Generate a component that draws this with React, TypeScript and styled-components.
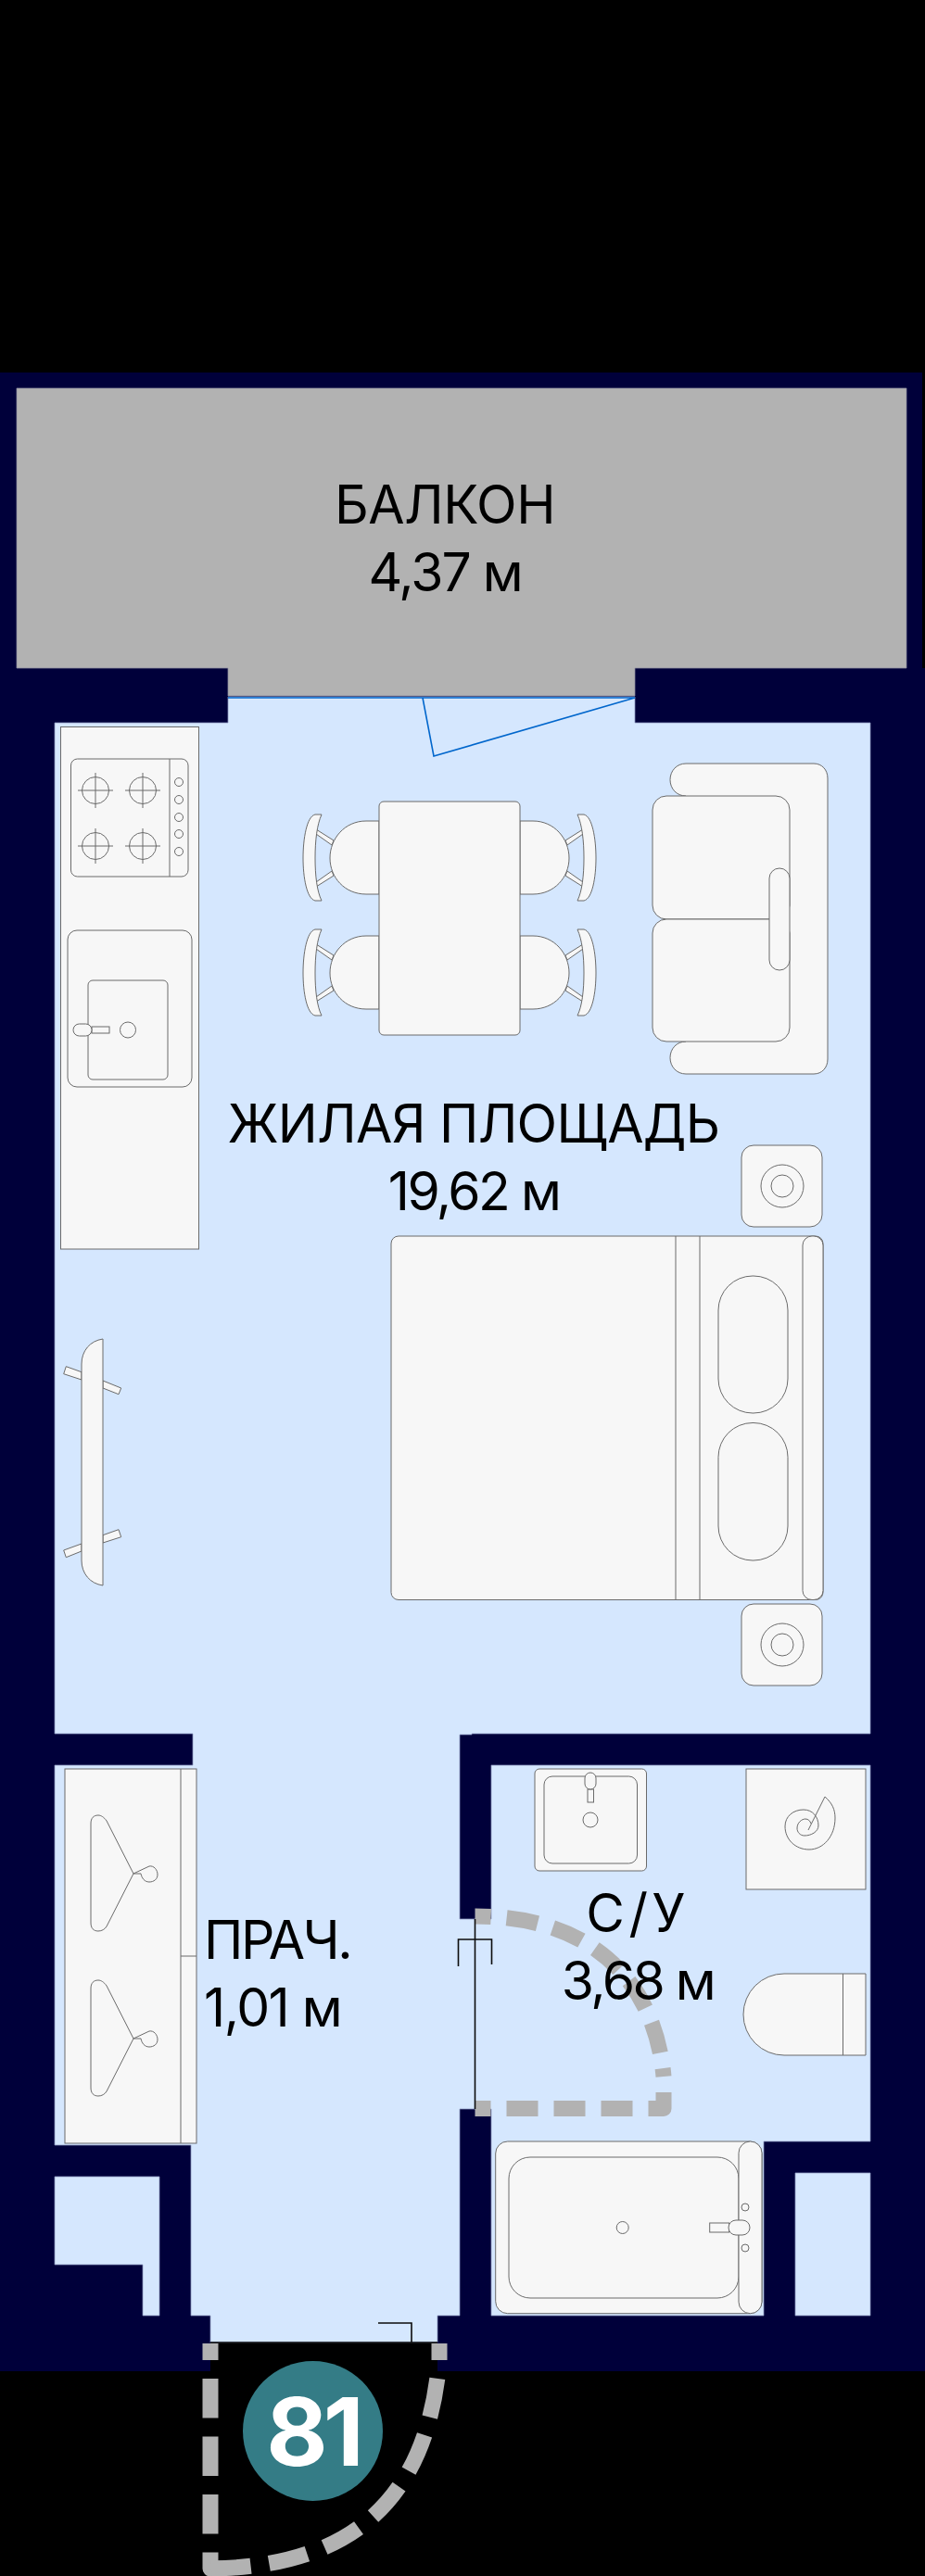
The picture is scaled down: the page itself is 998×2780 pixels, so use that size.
import styled, { createGlobalStyle } from "styled-components";

const GlobalStyle = createGlobalStyle`
  html, body {
    margin: 0;
    background: #000;
  }
`;

const Page = styled.div`
  position: relative;
  width: 998px;
  height: 2780px;
  overflow: hidden;
  background: #000;
  font-family: Inter, "Liberation Sans", sans-serif;
`;

const Drawing = styled.svg`
  display: block;
`;

const Wall = styled.polygon`
  fill: #00003a;
`;

const Room = styled.polygon`
  fill: #d5e7fe;
  stroke: #8b97bd;
  stroke-width: 0.75;
`;

const BalconyFloor = styled.polygon`
  fill: #b2b2b2;
  stroke: #8e8ea2;
  stroke-width: 0.75;
`;

const Furniture = styled.g`
  fill: #f7f7f7;
  stroke: #6b6b6b;
  stroke-width: 1;
`;

const WindowLine = styled.path`
  fill: none;
  stroke: #0066cc;
  stroke-width: 1.6;
`;

const DoorLine = styled.path`
  fill: none;
  stroke: #0c0c0c;
  stroke-width: 1.6;
`;

const Swing = styled.path<{ $dash: string }>`
  fill: none;
  stroke: #b2b2b2;
  stroke-width: 17;
  stroke-linejoin: round;
  stroke-dasharray: ${(p) => p.$dash};
`;

const RoomLabel = styled.div<{ $left: number; $top: number; $width: number; $align?: string }>`
  position: absolute;
  left: ${(p) => p.$left}px;
  top: ${(p) => p.$top}px;
  width: ${(p) => p.$width}px;
  color: #000;
  font-size: 57px;
  font-weight: 400;
  line-height: 73px;
  text-align: ${(p) => p.$align ?? "center"};
  white-space: nowrap;
`;

const RoomName = styled.div<{ $spacing: number }>`
  letter-spacing: ${(p) => p.$spacing}px;
`;

const RoomArea = styled.div<{ $spacing: number }>`
  letter-spacing: ${(p) => p.$spacing}px;
`;

const Badge = styled.div`
  position: absolute;
  left: 262px;
  top: 2548px;
  display: flex;
  align-items: center;
  justify-content: center;
  width: 151px;
  height: 151px;
  border-radius: 50%;
  background: #347c86;
  color: #fff;
  font-size: 102px;
  font-weight: 700;
  letter-spacing: -5px;
`;

function Chair({ mirror, shift }: { mirror?: boolean; shift: number }) {
  const place = mirror
    ? `translate(970 ${shift}) scale(-1 1)`
    : `translate(0 ${shift})`;
  return (
    <g transform={place}>
      <polygon points="341,895 360,907 358,912 341,900" />
      <polygon points="341,957 360,945 358,940 341,952" />
      <path d="M409,886 H395 C372,886 356,905 356,926 C356,947 372,965 395,965 H409 Z" />
      <path d="M347,879 H340 C331,881 327,905 327,926 C327,947 331,970 340,972 H347 C342,962 340,945 340,926 C340,907 342,890 347,879 Z" />
    </g>
  );
}

function Burner({ x, y }: { x: number; y: number }) {
  return (
    <g>
      <circle cx={x} cy={y} r={14.5} />
      <path d={`M${x - 19},${y} H${x + 19} M${x},${y - 19} V${y + 19}`} />
    </g>
  );
}

function Nightstand({ y }: { y: number }) {
  return (
    <g>
      <rect x={800} y={y} width={87} height={88} rx={13} />
      <circle cx={844} cy={y + 44} r={23} />
      <circle cx={844} cy={y + 44} r={12} />
    </g>
  );
}

function Hanger({ shift }: { shift: number }) {
  return (
    <path
      transform={`translate(0 ${shift})`}
      fill="none"
      d="M144,2022 L115,1965 C112,1961 109,1959 106,1959 C101,1959 98,1962 98,1968 V2075 C98,2081 101,2084 106,2084 C110,2084 113,2082 115,2079 L144,2022 L161,2014 C166,2013 170,2018 170,2023 C170,2028 166,2031 161,2031 C156,2031 153,2027 152,2022 H144"
    />
  );
}

function App() {
  return (
    <Page>
      <GlobalStyle />
      <Drawing width="998" height="2780" viewBox="0 0 998 2780">
        <Wall points="0,402 995,402 995,721 998,721 998,2559 472,2559 472,2528 227,2528 227,2559 0,2559" />
        <BalconyFloor points="18,419 978,419 978,721 685,721 685,751 246,751 246,721 18,721" />
        <Room points="246,752 685,752 685,780 939,780 939,1871 509,1871 509,1872 496,1872 496,2071 530,2071 530,1905 939,1905 939,2311 824,2311 824,2499 530,2499 530,2276 496,2276 496,2499 472,2499 472,2528 227,2528 227,2499 206,2499 206,2315 59,2315 59,1905 208,1905 208,1871 59,1871 59,780 246,780" />
        <Room points="59,2349 172,2349 172,2499 154,2499 154,2444 59,2444" />
        <Room points="858,2345 939,2345 939,2499 858,2499" />

        <WindowLine d="M246,753 H685 L468,816 L456,753" />

        {/* kitchen run */}
        <Furniture>
          <rect x={65.5} y={784.5} width={149} height={563.5} />
          <rect x={76.5} y={819} width={126.5} height={127} rx={7} />
          <path d="M183,819 V946" />
          <Burner x={103} y={853} />
          <Burner x={154} y={853} />
          <Burner x={103} y={913} />
          <Burner x={154} y={913} />
          {[844, 863, 882, 900, 919].map((y) => (
            <circle key={y} cx={193} cy={y} r={4.5} />
          ))}
          <rect x={73} y={1004} width={134} height={169} rx={10} />
          <rect x={95} y={1058} width={86} height={107} rx={5} />
          <rect x={99} y={1108} width={19} height={7} />
          <rect x={79} y={1105} width={20} height={13} rx={6.5} />
          <circle cx={138} cy={1111.5} r={8.5} />
        </Furniture>

        {/* dining table */}
        <Furniture>
          <Chair shift={0} />
          <Chair shift={124} />
          <Chair mirror shift={0} />
          <Chair mirror shift={124} />
          <rect x={409} y={865} width={152} height={252} rx={5} />
        </Furniture>

        {/* sofa */}
        <Furniture>
          <path d="M740,824 H878 C887,824 893,831 893,840 V1143 C893,1152 887,1159 878,1159 H740 C730,1159 723,1151 723,1141.5 C723,1132 730,1124 740,1124 H740 V859 C730,859 723,851 723,841.5 C723,832 730,824 740,824 Z" />
          <rect x={704} y={859} width={148} height={133} rx={15} />
          <rect x={704} y={992} width={148} height={132} rx={15} />
          <rect x={830} y={937} width={22} height={110} rx={11} />
        </Furniture>

        {/* bed and bedside tables */}
        <Furniture>
          <Nightstand y={1236} />
          <Nightstand y={1731} />
          <rect x={422} y={1334} width={466} height={392.5} rx={8} />
          <path d="M729,1334 V1726.5 M755,1334 V1726.5" />
          <rect x={866} y={1334} width={22} height={392.5} rx={10} />
          <rect x={775} y={1377} width={75} height={148} rx={37} />
          <rect x={775} y={1535.5} width={75} height={148.5} rx={37} />
        </Furniture>

        {/* rail by the left wall */}
        <Furniture>
          <polygon points="71.3,1474.7 88,1480.7 88,1489 68.7,1482.7" />
          <polygon points="111,1490 130.7,1498 128,1504.7 111,1498" />
          <polygon points="111,1656.7 128,1650.7 130.7,1658.7 111,1665" />
          <polygon points="88,1666 68.7,1673 71.3,1680.7 88,1674" />
          <path d="M111,1445 V1711 C97,1709 88,1698 88,1684 V1472 C88,1458 97,1447 111,1445 Z" />
        </Furniture>

        {/* wardrobe */}
        <Furniture>
          <rect x={70} y={1909} width={142} height={404} />
          <path d="M195,1909 V2313 M195,2111 H212" />
          <Hanger shift={0} />
          <Hanger shift={178} />
        </Furniture>

        {/* bathroom */}
        <Furniture>
          <rect x={577} y={1909} width={120.5} height={110} rx={5} />
          <rect x={587} y={1917} width={100.5} height={94} rx={9} />
          <rect x={634} y={1931} width={6.5} height={14} />
          <rect x={631} y={1913} width={12} height={18} rx={6} />
          <circle cx={637} cy={1964} r={8} />
          <rect x={805} y={1909} width={129} height={130} />
          <path
            fill="none"
            d="M890,1939 C898,1946 901,1953 901,1962 C901,1982 888,1996 873,1996 C858,1996 847,1985 847,1971 C847,1960 856,1953 867,1953 C877,1953 883,1961 883,1970 C883,1977 875,1981 868,1981 C863,1981 860,1977 860,1973 C860,1967 865,1963 869,1963 C872,1963 874,1965 875,1968 M890,1939 L872,1975"
          />
          <path d="M934,2130 H846 A44,44 0 0 0 846,2218 H934 Z M909.5,2130 V2218" />
          <rect x={534.7} y={2311} width={287.3} height={185.7} rx={13} />
          <rect x={549} y={2328} width={248} height={152} rx={23} />
          <rect x={797} y={2311} width={25} height={185.7} rx={12.5} />
          <circle cx={671.7} cy={2404} r={6.5} />
          <rect x={765.7} y={2399} width={21} height={10} />
          <rect x={786} y={2396} width={23} height={16} rx={8} />
          <circle cx={804} cy={2382} r={4} />
          <circle cx={804} cy={2426} r={4} />
        </Furniture>

        <Swing
          $dash="17 17 34 17 34 17 34 17 34 17 34 17 34 400"
          d="M512.5,2068 C650,2068 708,2150 716,2241"
        />
        <Swing
          $dash="17 17 34 17 34 17 34 17 34 17 34 400"
          d="M512.5,2275.5 H716 V2258"
        />
        <DoorLine d="M512.5,2071 V2276 M494.5,2122 V2093 H530.5 V2120" />

        <Swing $dash="18 20 42.5 20 42.5 20 42.5 20 36 400" d="M227,2529 V2772 H245" />
        <Swing
          $dash="18 20 42.5 20 42.5 20 42.5 20 42.5 20 42.5 20 42.5 400"
          d="M474,2529 V2547 C462,2687 390,2770 227,2772"
        />
        <DoorLine d="M227,2528 H472 M408,2507 H444 V2528" />
      </Drawing>

      <RoomLabel $left={280} $top={508} $width={400}>
        <RoomName $spacing={-0.5}>БАЛКОН</RoomName>
        <RoomArea $spacing={-2}>4,37 м</RoomArea>
      </RoomLabel>
      <RoomLabel $left={211} $top={1176} $width={600}>
        <RoomName $spacing={-0.7}>ЖИЛАЯ ПЛОЩАДЬ</RoomName>
        <RoomArea $spacing={-2.5}>19,62 м</RoomArea>
      </RoomLabel>
      <RoomLabel $left={220} $top={2057} $width={280} $align="left">
        <RoomName $spacing={-2.4}>ПРАЧ.</RoomName>
        <RoomArea $spacing={-1.5}>1,01 м</RoomArea>
      </RoomLabel>
      <RoomLabel $left={488} $top={2028} $width={400}>
        <RoomName $spacing={4.5}>С/У</RoomName>
        <RoomArea $spacing={-2.5}>3,68 м</RoomArea>
      </RoomLabel>
      <Badge>81</Badge>
    </Page>
  );
}

export default App;
